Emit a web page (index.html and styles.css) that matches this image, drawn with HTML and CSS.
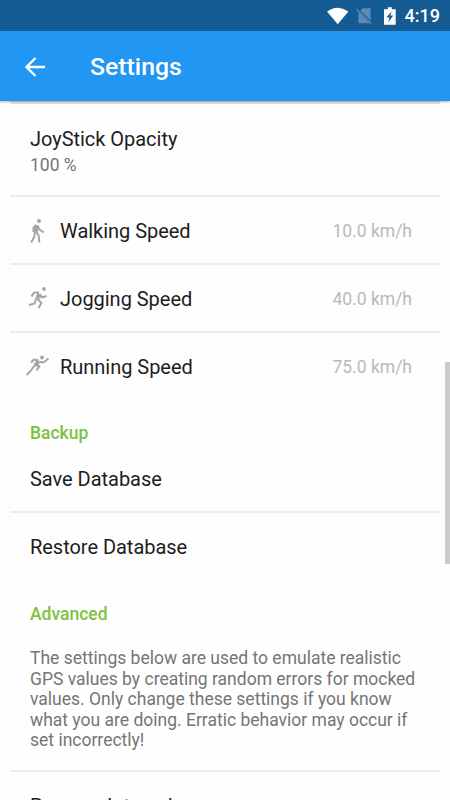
FILE: index.html
```html
<!DOCTYPE html>
<html lang="en">
<head>
<meta charset="utf-8">
<title>Settings</title>
<link rel="stylesheet" href="styles.css">
</head>
<body>
<div class="screen">
  <header class="status">
    <svg class="wifi" width="22" height="18" viewBox="0 0 22 18"><path d="M0 4.500Q11-3.500 22 4.500L11 17.500Z" fill="#fff"/></svg>
    <svg class="sim" width="18" height="18" viewBox="0 0 18 18"><path d="M7 1h8v12.500L4.500 3.500zM2.500 4.500l11.500 12H2.500z" fill="#5b8ab6"/><path d="M.5 2l15.500 15" stroke="#5b8ab6" stroke-width="1.300"/></svg>
    <svg class="battery" width="12" height="18" viewBox="0 0 12 18"><path d="M4 0h4v2h4v16H0V2h4z" fill="#fff"/><path d="M8 4L2.500 10.500H5.500L4.500 15.500L9.500 8.500H6.500Z" fill="#145a93"/></svg>
    <span class="clock">4:19</span>
  </header>
  <nav class="bar">
    <svg width="20" height="20" viewBox="0 0 20 20"><path d="M20 10H2M10.500 1L1.500 10l9 9" fill="none" stroke="#fff" stroke-width="2.300"/></svg>
    <h1>Settings</h1>
  </nav>
  <main class="list">
    <div class="row opacity"><div class="name">JoyStick Opacity</div><div class="sub">100 %</div></div>
    <div class="row speed">
      <svg class="icon" viewBox="0 0 30 30"><circle cx="19" cy="5" r="2"/><path d="M16.500 9.500L16 16" class="torso"/><path d="M16.500 9l-3 2.500v4.500M17.500 9.500l2 4 4.200 3M15 16l-.8 5-3 5.500M16.500 16l2.300 4 .5 6.500"/></svg>
      <span class="name">Walking Speed</span><span class="value">10.0 km/h</span>
    </div>
    <div class="row speed">
      <svg class="icon" viewBox="0 0 30 30"><circle cx="24" cy="5" r="1.900"/><path d="M19 9.500l-1.500 5" class="torso"/><path d="M19 8.500h-5l-2.500 4M20 10l1.500 3.500 5-1.500M16.500 14l-2 5.500-5.500 1.500M17.500 15l4 4-3 5"/></svg>
      <span class="name">Jogging Speed</span><span class="value">40.0 km/h</span>
    </div>
    <div class="row speed">
      <svg class="icon" viewBox="0 0 30 30"><circle cx="22" cy="5.500" r="1.900"/><path d="M19 9l-4 4.500" class="torso"/><path d="M18.500 8.500l-4.500-1-3 3M20 10l3.500.5 5-4M15 13l-4.500 6L6.500 23M16 13.500l3.500.5-3 4.500"/></svg>
      <span class="name">Running Speed</span><span class="value">75.0 km/h</span>
    </div>
    <h2 class="backup">Backup</h2>
    <div class="row save"><span class="name">Save Database</span></div>
    <div class="row restore"><span class="name">Restore Database</span></div>
    <h2 class="advanced">Advanced</h2>
    <p class="row note">The settings below are used to emulate realistic<br>GPS values by creating random errors for mocked<br>values. Only change these settings if you know<br>what you are doing. Erratic behavior may occur if<br>set incorrectly!</p>
    <div class="row last"><span class="name">Process Interval</span></div>
  </main>
  <div class="scrollbar"></div>
</div>
</body>
</html>
```
FILE: styles.css
```css
* { box-sizing: border-box; }
body { margin: 0; font-family: Roboto, sans-serif; background: #fefefe; }
.screen { position: relative; height: 800px; overflow: hidden; display: flex; flex-direction: column; }
.status { height: 31px; flex: none; background: #145a93; display: flex; align-items: center; padding: 1px 10px 0 327px; color: #fff; }
.sim { margin-left: 8px; }
.battery { margin-left: 10px; }
.clock { margin-left: 9px; font-size: 18px; font-weight: 500; line-height: 30px; }
.bar { height: 70px; flex: none; background: #2196f3; display: flex; align-items: center; padding: 1px 0 0 25px; position: relative; box-shadow: 0 1px 2px rgba(0,0,0,.3); }
.bar h1 { margin: 0 0 0 45px; color: #fff; font-size: 24.800px; line-height: 30px; font-weight: 500; }
.list { margin: 0 10px; flex: none; border-top: 3px solid #e4e4e4; }
.row { border-bottom: 2px solid #ececec; margin: 0; padding: 0 20px; }
.name { font-size: 20px; line-height: 26px; color: #1d1d1d; letter-spacing: -0.030px; }
.opacity { height: 93px; padding-top: 22px; }
.sub { font-size: 17.500px; line-height: 26px; color: #757575; }
.speed { height: 68px; display: flex; align-items: center; padding: 2px 28px 0 10px; }
.speed:nth-child(4) { border-bottom: 0; padding-top: 0; }
.icon { width: 30px; height: 30px; margin-right: 10px; fill: #a5a5a5; }
.icon path { fill: none; stroke: #a5a5a5; stroke-width: 2; stroke-linejoin: round; }
.icon .torso { stroke-width: 4; }
.value { margin-left: auto; font-size: 17.500px; color: #b9b9b9; }
h2 { margin: 0; padding-left: 20px; font-size: 17.500px; font-weight: 500; line-height: 24px; color: #80c142; }
.backup { height: 44px; padding-top: 20px; }
.save, .restore { display: flex; align-items: center; height: 68px; }
.save { padding-top: 2px; }
.restore { border-bottom: 0; }
.advanced { height: 56px; padding-top: 21px; }
.note { height: 135px; padding-top: 11px; font-size: 17.500px; line-height: 20.500px; color: #757575; white-space: nowrap; }
.last { height: 68px; padding-top: 21px; border: 0; }
.scrollbar { position: absolute; right: 0; top: 362px; width: 5px; height: 202px; background: #cbcbcb; }
```
